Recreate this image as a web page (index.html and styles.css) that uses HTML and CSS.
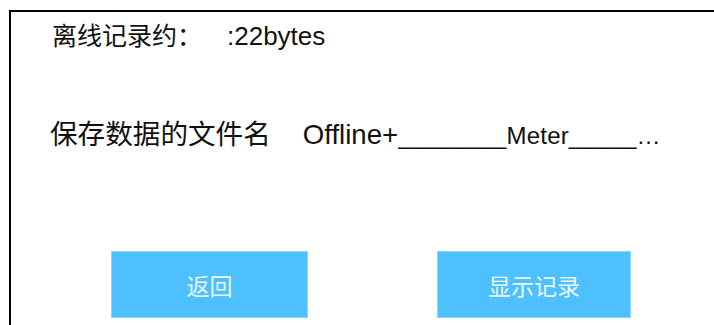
FILE: index.html
```html
<!DOCTYPE html>
<html lang="zh-CN">
<head>
<meta charset="utf-8">
<title>离线记录</title>
<link rel="stylesheet" href="styles.css">
</head>
<body>
<div class="frame">
  <div class="row row-size"><span class="size-label">离线记录约：</span><span class="size-value">:22bytes</span></div>
  <div class="row row-file">
    <span class="label">保存数据的文件名</span>
    <span class="prefix">Offline+</span><span class="filename">________Meter____________________</span>
  </div>
  <div class="actions">
    <button class="btn btn-back">返回</button>
    <button class="btn btn-show">显示记录</button>
  </div>
</div>
</body>
</html>
```

FILE: styles.css
```css
html, body {
  margin: 0;
  padding: 0;
  background: #ffffff;
  overflow: hidden;
}

body {
  width: 714px;
  height: 325px;
  font-family: "Liberation Sans", "Noto Sans CJK SC", sans-serif;
  color: #111111;
}

.frame {
  margin: 10px 0 0 9px;
  height: 315px;
  border-top: 2px solid #000000;
  border-left: 2px solid #000000;
  box-sizing: border-box;
  display: flex;
  flex-direction: column;
}

.row {
  white-space: nowrap;
}

.row-size {
  font-size: 25px;
  line-height: 30px;
  padding: 9px 0 0 41px;
}

.size-value {
  font-size: 26px;
  margin-left: 25px;
}

.row-file {
  display: flex;
  align-items: baseline;
  font-size: 27.6px;
  line-height: 32px;
  margin-top: 68px;
  padding-left: 39px;
}

.label {
  margin-right: 32px;
}

.prefix {
  font-size: 27.6px;
}

.filename {
  font-size: 24px;
  display: inline-block;
  width: 266px;
  letter-spacing: 0.2px;
  overflow: hidden;
  text-overflow: ellipsis;
}

.actions {
  display: flex;
  margin-top: 99px;
  padding-left: 100px;
  gap: 129px;
}

.btn {
  font-family: "Noto Sans CJK SC", sans-serif;
  font-size: 23px;
  height: 67px;
  background: #4fc0fe;
  border: 1px solid #8fd6fd;
  color: rgba(255, 255, 255, 0.9);
  padding: 0;
  cursor: pointer;
}

.btn-back {
  width: 197px;
}

.btn-show {
  width: 194px;
}
```
